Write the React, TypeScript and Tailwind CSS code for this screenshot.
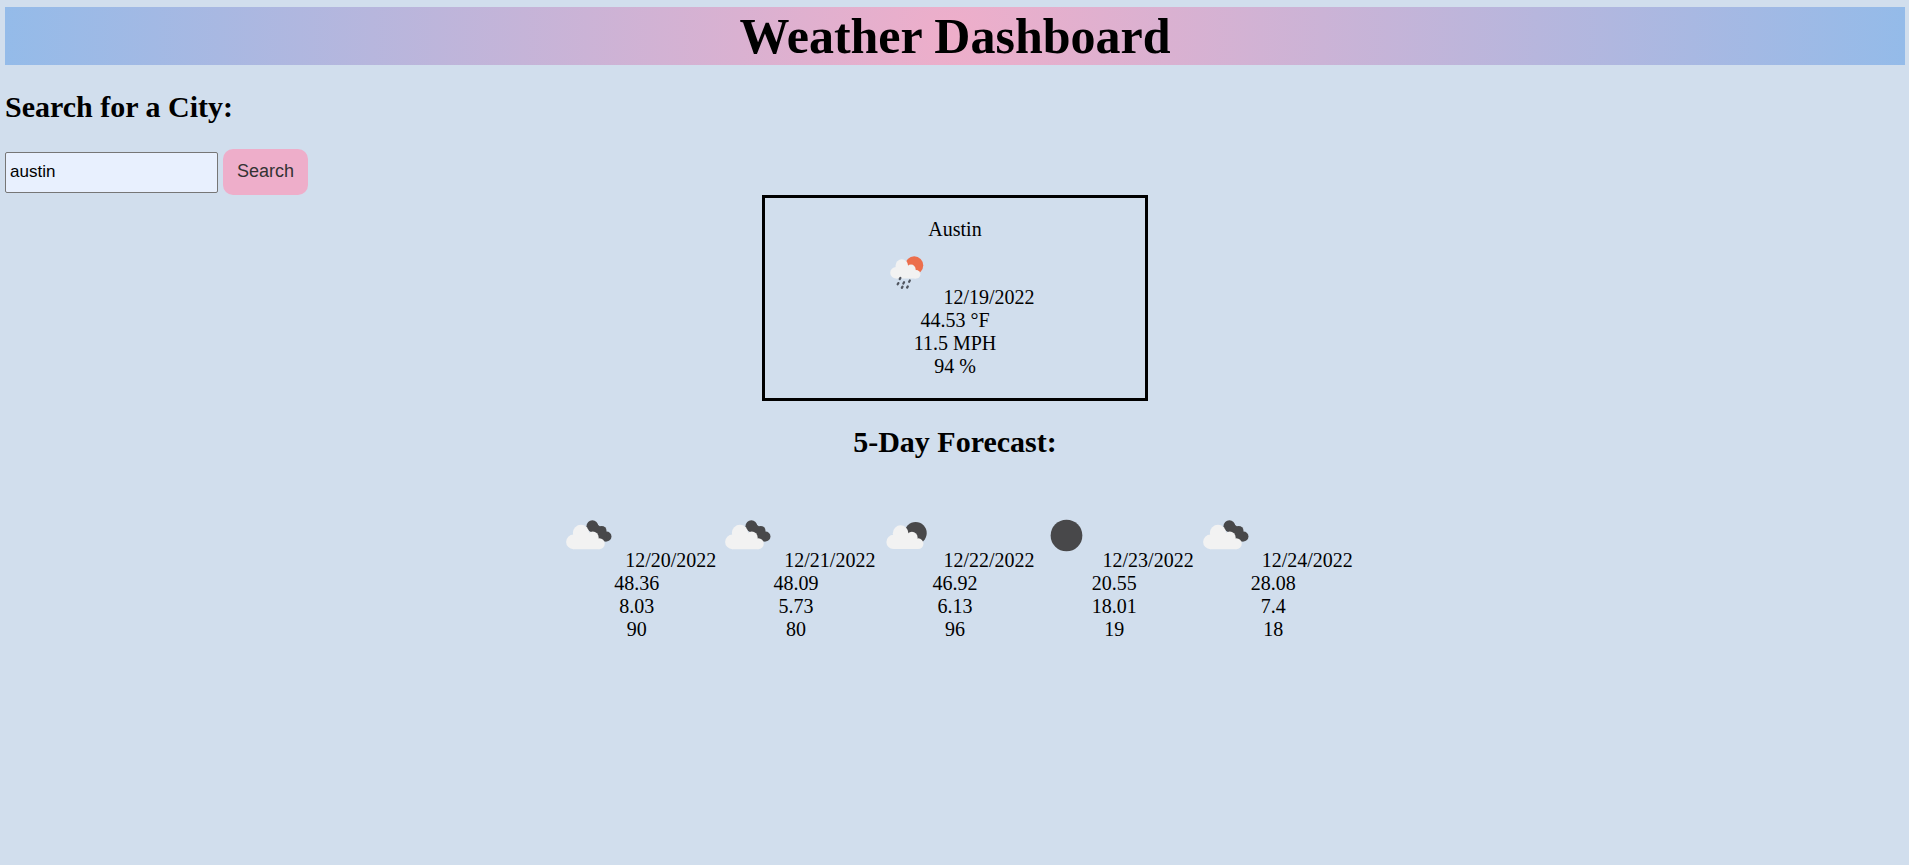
import { useState } from "react";

type Sky = "rain" | "broken" | "few" | "clear";

type Day = {
  sky: Sky;
  date: string;
  temperature: string;
  wind: string;
  humidity: string;
};

const today: Day = {
  sky: "rain",
  date: "12/19/2022",
  temperature: "44.53 °F",
  wind: "11.5 MPH",
  humidity: "94 %",
};

const forecast: Day[] = [
  { sky: "broken", date: "12/20/2022", temperature: "48.36", wind: "8.03", humidity: "90" },
  { sky: "broken", date: "12/21/2022", temperature: "48.09", wind: "5.73", humidity: "80" },
  { sky: "few", date: "12/22/2022", temperature: "46.92", wind: "6.13", humidity: "96" },
  { sky: "clear", date: "12/23/2022", temperature: "20.55", wind: "18.01", humidity: "19" },
  { sky: "broken", date: "12/24/2022", temperature: "28.08", wind: "7.4", humidity: "18" },
];

const raindrops = [
  [24.7, 36.9],
  [22.7, 42],
  [28.3, 41.2],
  [34, 39.5],
  [26.8, 45.5],
  [32, 45.3],
];

function Cloud({ transform }: { transform: string }) {
  return (
    <g transform={transform} fill="#f2f2f2">
      <circle cx="7.2" cy="16.8" r="7.2" />
      <circle cx="14.6" cy="8" r="8" />
      <circle cx="26.2" cy="12.4" r="5.8" />
      <circle cx="32.6" cy="18.6" r="5.4" />
      <path d="M7.2 10.5H28l4.6 4V24H7.2Z" />
    </g>
  );
}

function SkyIcon({ sky }: { sky: Sky }) {
  return (
    <svg viewBox="0 0 62 62" className="inline-block size-[63px] align-baseline" aria-hidden="true">
      {sky === "clear" && <circle cx="31" cy="31" r="15.6" fill="#48484a" />}
      {sky === "few" && (
        <>
          <circle cx="40" cy="28.6" r="10.9" fill="#48484a" />
          <Cloud transform="translate(11.2 21) scale(.96 .97)" />
        </>
      )}
      {sky === "broken" && (
        <>
          <g fill="#48484a">
            <circle cx="34.8" cy="21.8" r="5.8" />
            <circle cx="44" cy="26.3" r="4.7" />
            <circle cx="48.7" cy="32" r="4.9" />
            <path d="M30 24l9-4.5 9.5 7.5 0 9.9-5 0Z" />
          </g>
          <Cloud transform="translate(9 20.5)" />
        </>
      )}
      {sky === "rain" && (
        <>
          <circle cx="38.6" cy="23.9" r="8.9" fill="#ec6e4c" />
          <Cloud transform="translate(15 18) scale(.78 .79)" />
          {raindrops.map(([x, y]) => (
            <path
              key={`${x}-${y}`}
              d={`M${x + 0.3} ${y - 0.6}L${x - 0.4} ${y + 0.6}`}
              stroke="#50555f"
              strokeWidth="2.2"
              strokeLinecap="round"
            />
          ))}
        </>
      )}
    </svg>
  );
}

function Conditions({ day }: { day: Day }) {
  return (
    <>
      <p className="whitespace-nowrap">
        <SkyIcon sky={day.sky} /> {day.date}
      </p>
      <p>{day.temperature}</p>
      <p>{day.wind}</p>
      <p>{day.humidity}</p>
    </>
  );
}

export default function App() {
  const [city, setCity] = useState("austin");

  return (
    <div className="min-h-screen bg-[#d1deed] pt-[7px] pr-1 pl-[5px] font-['Liberation_Serif',serif] text-[20px] leading-[23px] text-black">
      <header className="bg-[radial-gradient(circle,#eeaeca_0%,#94bbe9_100%)] text-center">
        <h1 className="text-[50px] leading-[58px] font-bold">Weather Dashboard</h1>
      </header>

      <main>
        <form onSubmit={(event) => event.preventDefault()}>
          <h2 className="py-[25px] text-[30px] leading-[34px] font-bold">
            <label htmlFor="city">Search for a City:</label>
          </h2>
          <div className="flex items-center gap-[5px] font-['Liberation_Sans',sans-serif]">
            <input
              id="city"
              type="text"
              value={city}
              onChange={(event) => setCity(event.target.value)}
              className="h-[41px] w-[213px] rounded-[2px] border border-[#767676] bg-[#e8f0fe] px-1 text-[17px]"
            />
            <button
              type="submit"
              className="h-[46px] rounded-[10px] bg-[#eeaeca] px-3.5 pb-0.5 text-[18px] text-[#333333]"
            >
              Search
            </button>
          </div>
        </form>

        <section className="mx-auto w-[386px] max-w-full border-[3px] border-black p-5 text-center">
          <h3>Austin</h3>
          <Conditions day={today} />
        </section>

        <section className="text-center">
          <h2 className="pt-6 pb-[25px] text-[30px] leading-[34px] font-bold">5-Day Forecast:</h2>
          <ul className="flex flex-wrap justify-center py-5">
            {forecast.map((day) => (
              <li key={day.date}>
                <Conditions day={day} />
              </li>
            ))}
          </ul>
        </section>
      </main>
    </div>
  );
}
